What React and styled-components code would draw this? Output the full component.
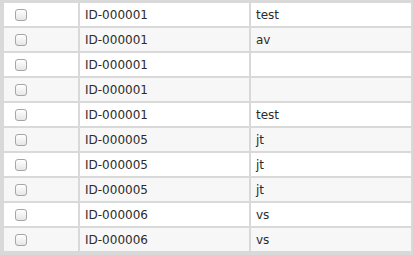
import styled, { createGlobalStyle } from "styled-components";

const rows = [
  { id: "ID-000001", name: "test" },
  { id: "ID-000001", name: "av" },
  { id: "ID-000001", name: "" },
  { id: "ID-000001", name: "" },
  { id: "ID-000001", name: "test" },
  { id: "ID-000005", name: "jt" },
  { id: "ID-000005", name: "jt" },
  { id: "ID-000005", name: "jt" },
  { id: "ID-000006", name: "vs" },
  { id: "ID-000006", name: "vs" },
];

function App() {
  return (
    <>
      <GlobalStyle />
      <Table>
        {rows.map((row, i) => (
          <Row key={i} $striped={i % 2 === 1}>
            <CheckCell>
              <Check type="checkbox" />
            </CheckCell>
            <Cell>{row.id}</Cell>
            <Cell>{row.name}</Cell>
          </Row>
        ))}
      </Table>
    </>
  );
}

export default App;

const GlobalStyle = createGlobalStyle`
  body {
    margin: 0;
    background: #d9d9d9;
    font-family: "DejaVu Sans", "Liberation Sans", sans-serif;
  }
`;

const Table = styled.div`
  display: flex;
  flex-direction: column;
  gap: 2px;
  width: 413px;
  box-sizing: border-box;
  padding: 3px 2px 4px 4px;
  background: #d9d9d9;
`;

const Row = styled.div`
  display: grid;
  grid-template-columns: 74px 169px 160px;
  gap: 2px;
  height: 23px;
  & > div {
    background: ${(p) => (p.$striped ? "#f7f7f7" : "#ffffff")};
  }
`;

const Cell = styled.div`
  display: flex;
  align-items: center;
  padding: 0 5px;
  font-size: 12px;
  color: #2b2b2b;
`;

const CheckCell = styled.div`
  display: flex;
  align-items: center;
  padding-left: 11px;
`;

const Check = styled.input`
  appearance: none;
  margin: 0;
  width: 12px;
  height: 12px;
  border: 1px solid #a6a6a6;
  border-radius: 3px;
  background: linear-gradient(#ffffff, #e6e6e6);
  box-sizing: border-box;
`;
